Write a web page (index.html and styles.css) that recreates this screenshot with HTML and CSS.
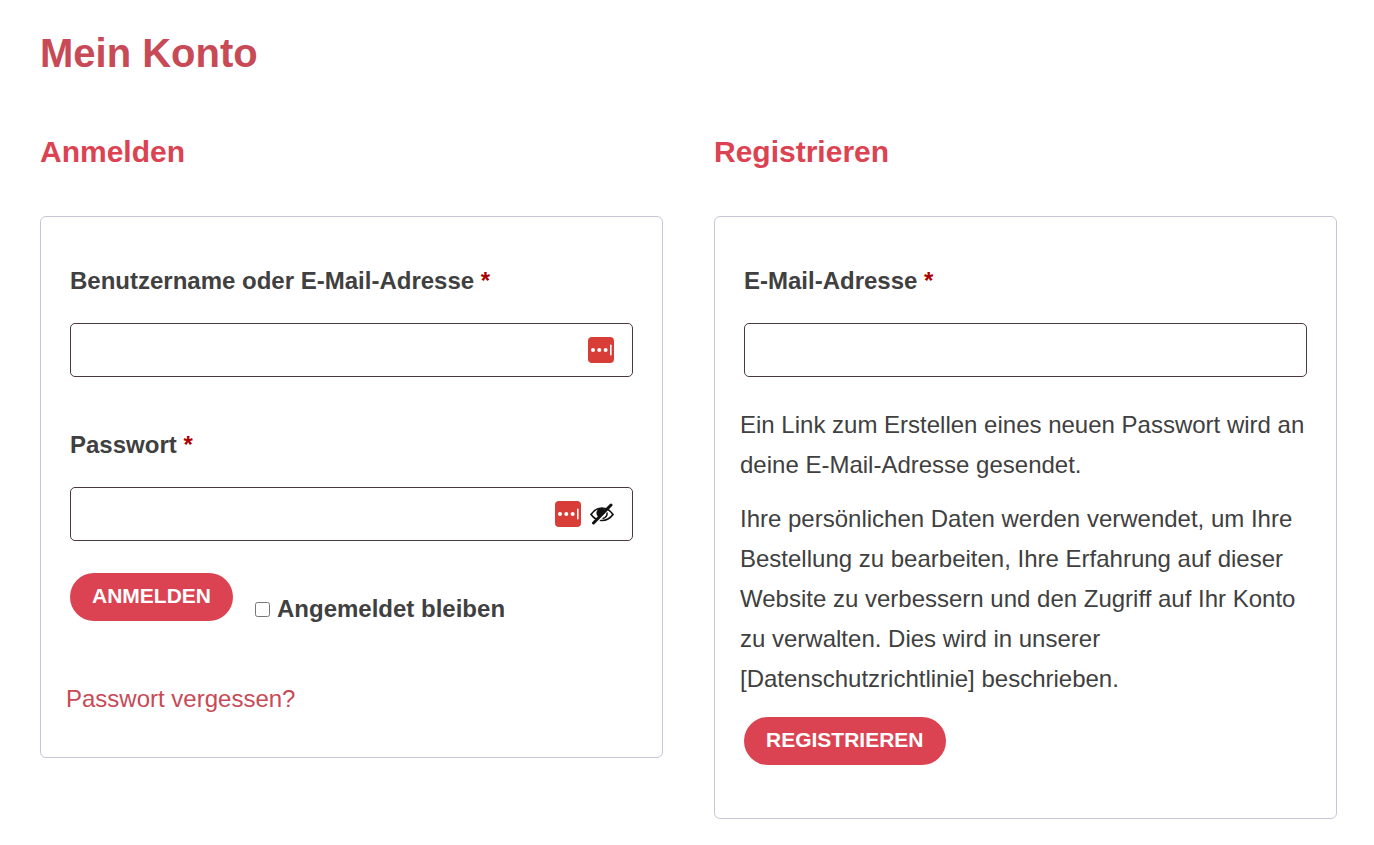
FILE: index.html
```html
<!DOCTYPE html>
<html lang="de">
<head>
    <meta charset="UTF-8">
    <meta name="viewport" content="width=device-width, initial-scale=1.0">
    <title>Mein Konto</title>
    <link rel="stylesheet" href="styles.css">
</head>
<body>
    <main class="account">
        <h1 class="page-title">Mein Konto</h1>

        <div class="columns">
            <section class="column">
                <h2 class="column-title">Anmelden</h2>

                <form class="card login" method="post">
                    <div class="field">
                        <label for="username">Benutzername oder E-Mail-Adresse <span class="required">*</span></label>
                        <div class="input-wrap">
                            <input type="text" id="username" name="username" autocomplete="username" required>
                            <div class="input-icons">
                                <svg class="icon-vault" viewBox="0 0 26 26" aria-hidden="true">
                                    <rect width="26" height="26" rx="4" fill="#d83d37"/>
                                    <circle cx="5" cy="13" r="2" fill="#fff"/>
                                    <circle cx="11.300" cy="13" r="2" fill="#fff"/>
                                    <circle cx="17.600" cy="13" r="2" fill="#fff"/>
                                    <rect x="22" y="7.500" width="1.600" height="11" rx=".8" fill="#fff"/>
                                </svg>
                            </div>
                        </div>
                    </div>

                    <div class="field">
                        <label for="password">Passwort <span class="required">*</span></label>
                        <div class="input-wrap">
                            <input type="password" id="password" name="password" autocomplete="current-password" required>
                            <div class="input-icons">
                                <svg class="icon-vault" viewBox="0 0 26 26" aria-hidden="true">
                                    <rect width="26" height="26" rx="4" fill="#d83d37"/>
                                    <circle cx="5" cy="13" r="2" fill="#fff"/>
                                    <circle cx="11.300" cy="13" r="2" fill="#fff"/>
                                    <circle cx="17.600" cy="13" r="2" fill="#fff"/>
                                    <rect x="22" y="7.500" width="1.600" height="11" rx=".8" fill="#fff"/>
                                </svg>
                                <button type="button" class="toggle-password" aria-label="Passwort anzeigen">
                                    <svg class="icon-eye" viewBox="0 0 24 22" fill="none" stroke="#111" aria-hidden="true">
                                        <path d="M1 11.500C4 7 8 5 12 5s8 2 11 6.500C20 15.500 16 17.500 12 17.500S4 15.500 1 11.500z" stroke-width="1.700"/>
                                        <path d="M12 5a5 5 0 0 0-4.500 8l1.500 2 6.500-7.500A5 5 0 0 0 12 5z" fill="#111" stroke="none"/>
                                        <path d="M7.500 18.500l9.500-9.500" stroke="#fff" stroke-width="1.800"/>
                                        <path d="M17 9.500a5 5 0 0 1-4.500 6" stroke-width="1.500"/>
                                        <path d="M3.500 20L21 2" stroke-width="3" stroke-linecap="round"/>
                                    </svg>
                                </button>
                            </div>
                        </div>
                    </div>

                    <div class="actions">
                        <button type="submit" class="btn">Anmelden</button>
                        <label class="remember" for="rememberme">
                            <input type="checkbox" id="rememberme" name="rememberme">
                            <span>Angemeldet bleiben</span>
                        </label>
                    </div>

                    <p class="lost-password"><a href="#">Passwort vergessen?</a></p>
                </form>
            </section>

            <section class="column">
                <h2 class="column-title">Registrieren</h2>

                <form class="card register" method="post">
                    <div class="field">
                        <label for="reg-email">E-Mail-Adresse <span class="required">*</span></label>
                        <div class="input-wrap">
                            <input type="email" id="reg-email" name="email" autocomplete="email" required>
                        </div>
                    </div>

                    <div class="notes">
                        <p>Ein Link zum Erstellen eines neuen Passwort wird an deine E-Mail-Adresse gesendet.</p>
                        <p>Ihre persönlichen Daten werden verwendet, um Ihre Bestellung zu bearbeiten, Ihre Erfahrung auf dieser Website zu verbessern und den Zugriff auf Ihr Konto zu verwalten. Dies wird in unserer [Datenschutzrichtlinie] beschrieben.</p>
                    </div>

                    <div class="actions">
                        <button type="submit" class="btn">Registrieren</button>
                    </div>
                </form>
            </section>
        </div>
    </main>

    <script>
        document.querySelector('.toggle-password').addEventListener('click', () => {
            const input = document.getElementById('password');
            input.type = input.type === 'password' ? 'text' : 'password';
        });
    </script>
</body>
</html>
```
FILE: styles.css
```css
* { box-sizing: border-box; }

body {
    margin: 0;
    background: #fff;
    color: #404040;
    font-family: "Liberation Sans", Arial, sans-serif;
    font-size: 24px;
    line-height: 40px;
}

h1, h2, p { margin: 0; }

a { color: #c74a56; text-decoration: none; }
a:hover { text-decoration: underline; }

.account { padding: 29px 37px 26px 40px; }

.page-title {
    margin-bottom: 57px;
    color: #c74a56;
    font-size: 40px;
    line-height: 48px;
}

.columns {
    display: grid;
    grid-template-columns: 1fr 1fr;
    gap: 51px;
    align-items: start;
}

.column-title {
    margin-bottom: 46px;
    color: #dc4352;
    font-size: 30px;
    line-height: 36px;
}

/* Form boxes */
.card {
    padding: 44px 25px 38px;
    border: 1px solid #cac5d6;
    border-radius: 6px;
}
.register { padding-bottom: 53px; }

.field { padding: 0 4px; }
.field + .field { margin-top: 48px; }
.field label {
    display: block;
    margin-bottom: 22px;
    font-weight: 700;
}
.required { color: #a00; }

.input-wrap { position: relative; }
.input-wrap input {
    display: block;
    width: 100%;
    height: 54px;
    padding: 0 16px;
    border: 1px solid #4a3a3f;
    border-radius: 5px;
    background: #fff;
    color: inherit;
    font: inherit;
}

.input-icons {
    position: absolute;
    top: 0;
    right: 19px;
    bottom: 0;
    display: flex;
    align-items: center;
    gap: 9px;
}
.input-icons svg { display: block; }
.icon-vault { width: 26px; height: 26px; }
.icon-eye { width: 24px; height: 22px; }
.toggle-password {
    padding: 0;
    border: 0;
    background: none;
    cursor: pointer;
}

.actions {
    display: flex;
    align-items: flex-start;
    gap: 22px;
    padding: 0 4px;
}
.login .actions { margin-top: 32px; }

.btn {
    padding: 11px 22px 13px;
    border: 0;
    border-radius: 24px;
    background: #dc4352;
    color: #fff;
    font: 700 21px/24px "Liberation Sans", Arial, sans-serif;
    text-transform: uppercase;
    cursor: pointer;
}

.remember {
    display: flex;
    align-items: center;
    gap: 7px;
    padding-top: 16px;
    font-weight: 700;
}
.remember input {
    width: 15px;
    height: 15px;
    margin: 0;
}

.lost-password { margin-top: 50px; }

.notes {
    display: grid;
    gap: 14px;
    margin: 28px 0 18px;
}

@media (max-width: 900px) {
    .columns { grid-template-columns: 1fr; }
}
```
